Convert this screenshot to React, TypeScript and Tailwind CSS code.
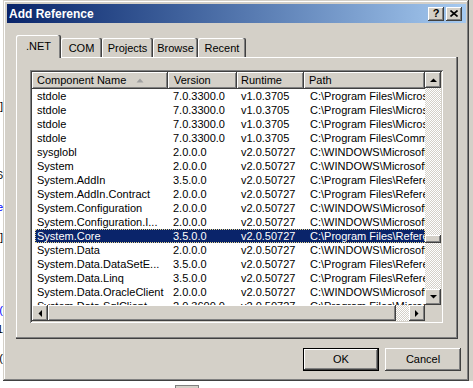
import React from "react";

const raised =
  "shadow-[inset_-1px_-1px_#404040,inset_1px_1px_#ffffff,inset_-2px_-2px_#808080]";
const hatch =
  "bg-[repeating-conic-gradient(#ffffff_0_25%,#d4d0c8_0_50%)] bg-[length:2px_2px]";

const rows = [
  ["stdole", "7.0.3300.0", "v1.0.3705", "C:\\Program Files\\Microsoft.NET\\Primary Interop Assemblies"],
  ["stdole", "7.0.3300.0", "v1.0.3705", "C:\\Program Files\\Microsoft Visual Studio 8"],
  ["stdole", "7.0.3300.0", "v1.0.3705", "C:\\Program Files\\Microsoft Visual Studio 9.0"],
  ["stdole", "7.0.3300.0", "v1.0.3705", "C:\\Program Files\\Common Files\\Microsoft Shared"],
  ["sysglobl", "2.0.0.0", "v2.0.50727", "C:\\WINDOWS\\Microsoft.NET\\Framework"],
  ["System", "2.0.0.0", "v2.0.50727", "C:\\WINDOWS\\Microsoft.NET\\Framework"],
  ["System.AddIn", "3.5.0.0", "v2.0.50727", "C:\\Program Files\\Reference Assemblies"],
  ["System.AddIn.Contract", "2.0.0.0", "v2.0.50727", "C:\\Program Files\\Reference Assemblies"],
  ["System.Configuration", "2.0.0.0", "v2.0.50727", "C:\\WINDOWS\\Microsoft.NET\\Framework"],
  ["System.Configuration.I...", "2.0.0.0", "v2.0.50727", "C:\\WINDOWS\\Microsoft.NET\\Framework"],
  ["System.Core", "3.5.0.0", "v2.0.50727", "C:\\Program Files\\Reference Assemblies"],
  ["System.Data", "2.0.0.0", "v2.0.50727", "C:\\WINDOWS\\Microsoft.NET\\Framework"],
  ["System.Data.DataSetE...", "3.5.0.0", "v2.0.50727", "C:\\Program Files\\Reference Assemblies"],
  ["System.Data.Linq", "3.5.0.0", "v2.0.50727", "C:\\Program Files\\Reference Assemblies"],
  ["System.Data.OracleClient", "2.0.0.0", "v2.0.50727", "C:\\WINDOWS\\Microsoft.NET\\Framework"],
  ["System.Data.SqlClient", "2.0.3600.0", "v2.0.50727", "C:\\Program Files\\Microsoft SQL Server"],
];

function Arrow({ dir }: { dir: "up" | "down" | "left" | "right" }) {
  const pts = {
    up: "0,4 7,4 3.5,0.5",
    down: "0,0 7,0 3.5,3.5",
    left: "4,0 4,7 0.5,3.5",
    right: "0,0 0,7 3.5,3.5",
  }[dir];
  const vertical = dir === "up" || dir === "down";
  return (
    <div className={`w-[16px] h-[16px] shrink-0 bg-[#d4d0c8] flex items-center justify-center ${raised}`}>
      <svg width={vertical ? 7 : 4} height={vertical ? 4 : 7} viewBox={vertical ? "0 0 7 4" : "0 0 4 7"}>
        <polygon points={pts} fill="#000" />
      </svg>
    </div>
  );
}

function Tab({ label, width, active }: { label: string; width: number; active?: boolean }) {
  return (
    <div
      style={{ width }}
      className={`flex items-start justify-center rounded-t-[2px] bg-[#d4d0c8] shadow-[inset_-1px_0_#404040,inset_-2px_0_#808080,inset_1px_1px_#ffffff] ${
        active ? "relative z-10 h-[23px] -mb-px pt-[3px]" : "h-[19px] pt-[2px]"
      }`}
    >
      {label}
    </div>
  );
}

export default function App() {
  return (
    <div className="w-[473px] h-[388px] overflow-hidden bg-white flex flex-col font-['Liberation_Sans',Arial,sans-serif] text-[11px] text-black">
      <div className="flex h-[381px]">
        {/* slivers of the window behind */}
        <div className="w-[3px] flex flex-col overflow-hidden text-[11px] leading-[10px]">
          <div className="h-[101px]" />
          <div className="flex justify-end h-[10px]">]</div>
          <div className="h-[59px]" />
          <div className="flex justify-end h-[10px]">6</div>
          <div className="h-[22px]" />
          <div className="flex justify-end h-[10px] text-[#0000ff]">e</div>
          <div className="h-[20px]" />
          <div className="flex justify-end h-[10px]">]</div>
          <div className="h-[63px]" />
          <div className="flex justify-end h-[10px] text-[#0000ff]">(</div>
          <div className="h-[9px]" />
          <div className="flex justify-end h-[10px]">1</div>
          <div className="h-[19px]" />
          <div className="flex justify-end h-[10px]">(</div>
        </div>

        {/* dialog window */}
        <div className="w-[466px] h-[381px] bg-[#d4d0c8] pt-[4px] pl-[4px] pr-[3px] flex flex-col shadow-[inset_-1px_-1px_#404040,inset_1px_1px_#d4d0c8,inset_-2px_-2px_#808080,inset_2px_2px_#ffffff]">
          <div className="h-[19px] flex items-center justify-between pl-[2px] pr-[4px] bg-linear-to-r from-[#0a246a] to-[#a6caf0]">
            <span className="text-white font-bold text-[12px]">Add Reference</span>
            <div className="flex gap-[2px]">
              <div className={`w-[16px] h-[14px] bg-[#d4d0c8] flex items-center justify-center font-bold text-[11px] leading-none ${raised}`}>
                ?
              </div>
              <div className={`w-[16px] h-[14px] bg-[#d4d0c8] flex items-center justify-center ${raised}`}>
                <svg width="8" height="7" viewBox="0 0 8 7">
                  <path d="M0.5 0.5 L7.5 6.5 M7.5 0.5 L0.5 6.5" stroke="#000" strokeWidth="1.6" />
                </svg>
              </div>
            </div>
          </div>

          <div className="mt-[12px] ml-[9px] h-[22px] flex items-end">
            <Tab label=".NET" width={45} active />
            <Tab label="COM" width={41} />
            <Tab label="Projects" width={51} />
            <Tab label="Browse" width={45} />
            <Tab label="Recent" width={48} />
          </div>

          <div className="ml-[9px] w-[442px] h-[282px] pt-[13px] pl-[14px] shadow-[inset_-1px_-1px_#404040,inset_-2px_-2px_#808080,inset_1px_1px_#ffffff]">
            <div className="w-[413px] h-[253px] p-[2px] bg-white shadow-[inset_1px_1px_#808080,inset_-1px_-1px_#ffffff,inset_2px_2px_#404040,inset_-2px_-2px_#d4d0c8]">
              <div className="flex">
                <div className="w-[393px]">
                  {/* header */}
                  <div className="flex h-[17px] leading-[17px] bg-[#d4d0c8]">
                    <div className={`w-[136px] pl-[5px] flex items-center ${raised}`}>
                      Component Name
                      <svg className="ml-[10px]" width="8" height="5" viewBox="0 0 8 5">
                        <polygon points="0.5,4.5 7.5,4.5 4,0.5" fill="#a0a0a0" />
                      </svg>
                    </div>
                    <div className={`w-[69px] pl-[6px] ${raised}`}>Version</div>
                    <div className={`w-[67px] pl-[4px] ${raised}`}>Runtime</div>
                    <div className={`w-[121px] pl-[5px] ${raised}`}>Path</div>
                  </div>
                  {/* rows */}
                  <div className="h-[216px] overflow-hidden">
                    {rows.map((r, i) => {
                      const sel = i === 10;
                      return (
                        <div
                          key={i}
                          className={`ml-[3px] flex h-[14px] leading-[14px] whitespace-nowrap ${
                            sel ? "bg-[#0a246a] text-white outline outline-1 outline-dotted outline-[#e8d890] -outline-offset-1" : ""
                          }`}
                        >
                          <div className="w-[133px] pl-[2px] overflow-hidden">{r[0]}</div>
                          <div className="w-[69px] pl-[5px]">{r[1]}</div>
                          <div className="w-[67px] pl-[4px]">{r[2]}</div>
                          <div className="w-[121px] pl-[6px] overflow-hidden">{r[3]}</div>
                        </div>
                      );
                    })}
                  </div>
                </div>
                {/* vertical scrollbar */}
                <div className="w-[16px] h-[233px] flex flex-col">
                  <Arrow dir="up" />
                  <div className={`flex-1 flex flex-col ${hatch}`}>
                    <div className="h-[147px]" />
                    <div className={`h-[8px] bg-[#d4d0c8] ${raised}`} />
                  </div>
                  <Arrow dir="down" />
                </div>
              </div>
              {/* horizontal scrollbar */}
              <div className="flex h-[16px]">
                <Arrow dir="left" />
                <div className={`w-[348px] bg-[#d4d0c8] ${raised}`} />
                <div className={`w-[13px] ${hatch}`} />
                <Arrow dir="right" />
                <div className="w-[16px] bg-[#d4d0c8]" />
              </div>
            </div>
          </div>

          <div className="mt-[9px] pr-[5px] flex justify-end gap-[6px]">
            <div className="w-[76px] h-[23px] border border-black">
              <div className={`w-full h-full bg-[#d4d0c8] flex items-center justify-center ${raised}`}>OK</div>
            </div>
            <div className={`w-[76px] h-[23px] bg-[#d4d0c8] flex items-center justify-center ${raised}`}>Cancel</div>
          </div>
        </div>

        <div className="w-[4px] bg-[#d4d0c8]" />
      </div>

      <div className="h-[7px] flex">
        <div className="ml-[175px] mt-[4px] w-[24px] h-[3px] border-t border-x border-[#808080] bg-[#d4d0c8]" />
      </div>
    </div>
  );
}
